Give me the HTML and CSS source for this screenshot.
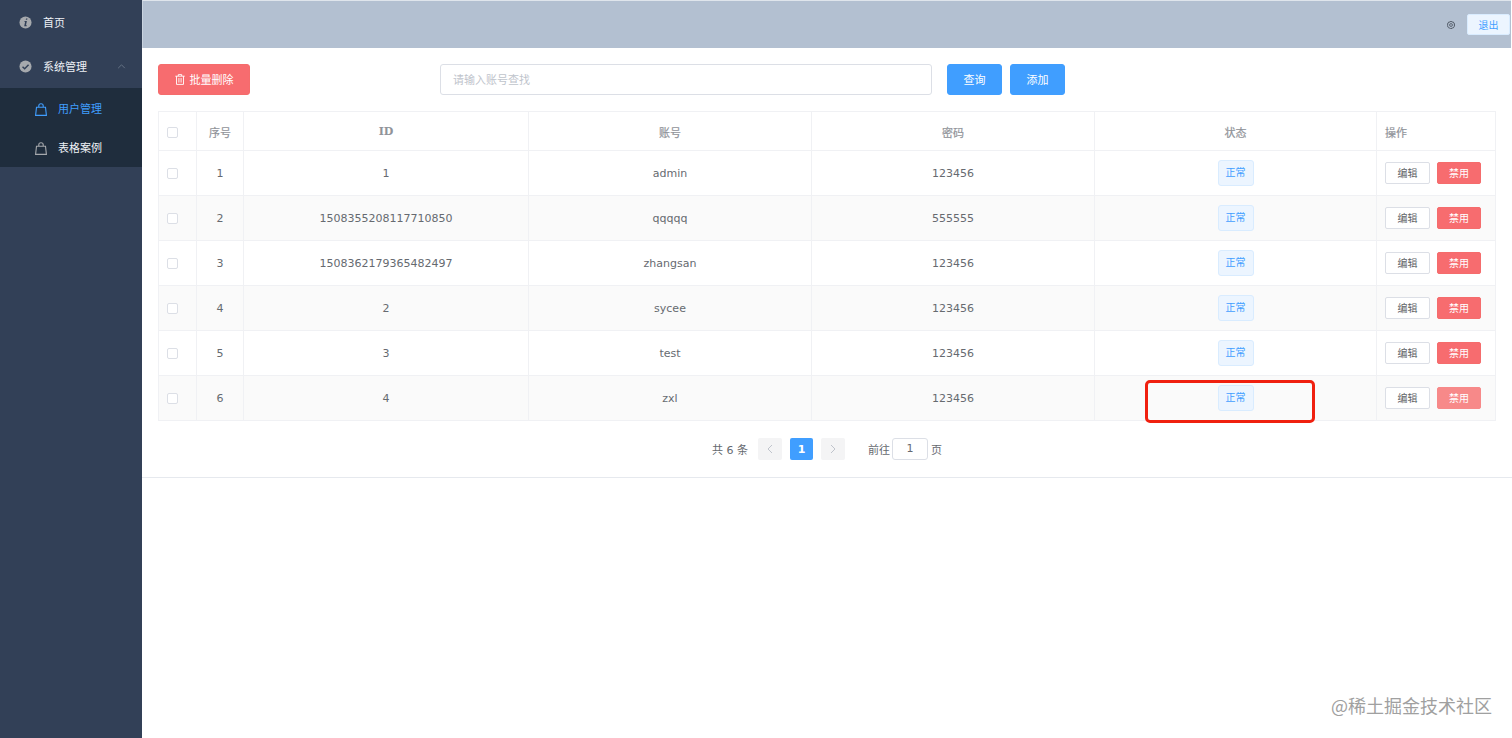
FILE: index.html
```html
<!DOCTYPE html>
<html lang="zh-CN">
<head>
<meta charset="utf-8">
<title>用户管理</title>
<link rel="stylesheet" href="styles.css">
</head>
<body>
<div class="app">
  <aside class="sidebar">
    <div class="menu-item home">
      <svg class="round-icon" viewBox="0 0 14 14"><circle cx="7" cy="7" r="6.5" fill="#a6a9ad"/><path d="M7.6 2.6h1.5l-.3 1.5H7.3zM6 5.4h2.5L7.500 10h1l-.3 1H5.600l1-4.700h-1z" fill="#324057"/></svg>
      <span>首页</span>
    </div>
    <div class="menu-item system">
      <svg class="round-icon" viewBox="0 0 14 14"><circle cx="7" cy="7" r="6.5" fill="#a6a9ad"/><path d="M3.800 7.200l2.300 2.200 4.200-4.300" fill="none" stroke="#324057" stroke-width="1.600"/></svg>
      <span>系统管理</span>
      <svg class="chevron" viewBox="0 0 10 6"><path d="M1 5l4-4 4 4" fill="none" stroke="#6f7c8d" stroke-width="1"/></svg>
    </div>
    <div class="submenu">
      <div class="sub-item active">
        <svg class="bag" viewBox="0 0 12 13"><path d="M.6 12.400L1.500 4.300h9l.9 8.100zM3.800 4.300V2.700Q3.800.7 6 .7T8.200 2.700v1.600" fill="none" stroke="currentColor" stroke-width="1.100"/></svg>
        <span>用户管理</span>
      </div>
      <div class="sub-item">
        <svg class="bag" viewBox="0 0 12 13"><path d="M.6 12.400L1.500 4.300h9l.9 8.100zM3.800 4.300V2.700Q3.800.7 6 .7T8.200 2.700v1.600" fill="none" stroke="#a6a9ad" stroke-width="1.100"/></svg>
        <span>表格案例</span>
      </div>
    </div>
  </aside>
  <main class="main">
    <header class="topbar">
      <svg class="gear" viewBox="0 0 12 12"><circle cx="6" cy="6" r="4.200" fill="none" stroke="#555e6b" stroke-width="1.300" stroke-dasharray="2.200 .4"/><circle cx="6" cy="6" r="1.700" fill="none" stroke="#555e6b" stroke-width="1.100"/></svg>
      <button class="logout">退出</button>
    </header>
    <section class="content">
      <div class="toolbar">
        <button class="btn danger batch">
          <svg class="trash" viewBox="0 0 10 11"><path d="M.3 2.200h9.400M3.300 2V.6h3.400V2M1.500 2.200v8.200h7V2.200M3.900 4v4.600M6.100 4v4.600" fill="none" stroke="#fff" stroke-width=".9"/></svg>
          <span>批量删除</span>
        </button>
        <div class="search">请输入账号查找</div>
        <button class="btn primary query">查询</button>
        <button class="btn primary add">添加</button>
      </div>
      <table class="grid">
        <colgroup>
          <col class="c-check"><col class="c-num"><col class="c-id"><col class="c-acc"><col class="c-pwd"><col class="c-state"><col class="c-op">
        </colgroup>
        <thead>
          <tr>
            <th><span class="check"></span></th><th>序号</th><th class="latin">ID</th><th>账号</th><th>密码</th><th>状态</th><th class="left">操作</th>
          </tr>
        </thead>
        <tbody>
          <tr>
            <td><span class="check"></span></td><td>1</td><td>1</td><td>admin</td><td>123456</td><td><span class="tag">正常</span></td>
            <td class="left"><div class="ops"><button class="mini plain">编辑</button><button class="mini red">禁用</button></div></td>
          </tr>
          <tr>
            <td><span class="check"></span></td><td>2</td><td>1508355208117710850</td><td>qqqqq</td><td>555555</td><td><span class="tag">正常</span></td>
            <td class="left"><div class="ops"><button class="mini plain">编辑</button><button class="mini red">禁用</button></div></td>
          </tr>
          <tr>
            <td><span class="check"></span></td><td>3</td><td>1508362179365482497</td><td>zhangsan</td><td>123456</td><td><span class="tag">正常</span></td>
            <td class="left"><div class="ops"><button class="mini plain">编辑</button><button class="mini red">禁用</button></div></td>
          </tr>
          <tr>
            <td><span class="check"></span></td><td>4</td><td>2</td><td>sycee</td><td>123456</td><td><span class="tag">正常</span></td>
            <td class="left"><div class="ops"><button class="mini plain">编辑</button><button class="mini red">禁用</button></div></td>
          </tr>
          <tr>
            <td><span class="check"></span></td><td>5</td><td>3</td><td>test</td><td>123456</td><td><span class="tag">正常</span></td>
            <td class="left"><div class="ops"><button class="mini plain">编辑</button><button class="mini red">禁用</button></div></td>
          </tr>
          <tr>
            <td><span class="check"></span></td><td>6</td><td>4</td><td>zxl</td><td>123456</td><td><span class="tag">正常</span></td>
            <td class="left"><div class="ops"><button class="mini plain">编辑</button><button class="mini red faded">禁用</button></div></td>
          </tr>
        </tbody>
      </table>
      <nav class="pager">
        <span class="total">共 6 条</span>
        <span class="page-btn"><svg viewBox="0 0 6 10"><path d="M5 1L1 5l4 4" fill="none" stroke="#c0c4cc" stroke-width="1"/></svg></span>
        <span class="page-btn current">1</span>
        <span class="page-btn"><svg viewBox="0 0 6 10"><path d="M1 1l4 4-4 4" fill="none" stroke="#c0c4cc" stroke-width="1"/></svg></span>
        <span class="goto">前往</span>
        <span class="page-input">1</span>
        <span class="unit">页</span>
      </nav>
    </section>
  </main>
</div>
<div class="highlight"></div>
<div class="watermark">@稀土掘金技术社区</div>
</body>
</html>
```
FILE: styles.css
```css
* { box-sizing: border-box; }
html, body { margin: 0; height: 100%; overflow: hidden; }
body {
  font-family: "DejaVu Sans", "Noto Sans CJK SC", sans-serif;
  font-size: 11px;
  color: #666a70;
  background: #fff;
}
button { font-family: inherit; cursor: pointer; }

.app { display: flex; height: 738px; }

.sidebar { width: 142px; flex: none; background: #324057; color: #fff; }
.menu-item { display: flex; align-items: center; padding-left: 19px; font-size: 11px; color: #eef1f6; }
.menu-item span { margin-left: 11px; margin-bottom: 1px; }
.menu-item.home { height: 44px; }
.menu-item.system { height: 44px; }
.round-icon { width: 13px; height: 13px; flex: none; }
.chevron { width: 9px; height: 5px; margin-left: 30px; }
.submenu { background: #1f2d3d; height: 79px; padding-top: 2px; }
.sub-item { display: flex; align-items: center; height: 39px; padding-left: 35px; color: #eef1f6; }
.sub-item.active { color: #409eff; }
.sub-item span { margin-left: 11px; margin-bottom: 4px; }
.bag { width: 12px; height: 13px; flex: none; }

.main { flex: 1; min-width: 0; display: flex; flex-direction: column; margin-right: 1px; }
.topbar {
  height: 48px; flex: none; background: #b3c0d1; border-top: 1px solid #dfe5ec; border-left: 1px solid #c9d3df;
  display: flex; align-items: center; justify-content: flex-end; padding-right: 1px;
}
.gear { width: 10px; height: 10px; margin-right: 11px; }
.logout {
  width: 43px; height: 21px; padding: 0 0 1px; font-size: 10px; color: #409eff;
  background: #ecf5ff; border: 1px solid #d9ecff; border-radius: 2px;
}

.content { height: 430px; flex: none; padding: 16px 15px 0 16px; border-bottom: 1px solid #e6e9ee; margin-right: -1px; }
.toolbar { display: flex; align-items: center; height: 31px; }
.btn { height: 31px; border-radius: 3px; padding: 0 0 2px; font-size: 11px; color: #fff; border: 1px solid transparent; }
.btn.danger { width: 92px; background: #f76c6f; border-color: #f56c6c; display: flex; align-items: center; justify-content: center; gap: 5px; }
.trash { width: 10px; height: 11px; margin-top: 2px; }
.search {
  width: 492px; height: 31px; margin-left: 190px; padding-left: 12px; line-height: 31px;
  border: 1px solid #dcdfe6; border-radius: 3px; color: #c0c4cc;
}
.btn.primary { width: 55px; background: #409eff; border-color: #409eff; }
.btn.query { margin-left: 15px; }
.btn.add { margin-left: 8px; }

.grid { margin-top: 16px; width: 1337px; table-layout: fixed; border-collapse: collapse; border: 1px solid #f0f1f4; }
.c-check { width: 38px; } .c-num { width: 47px; } .c-id { width: 285px; } .c-acc { width: 283px; }
.c-pwd { width: 283px; } .c-state { width: 282px; } .c-op { width: 119px; }
.grid th, .grid td { border: 1px solid #f0f1f4; padding: 0; text-align: center; }
.grid th { height: 39px; padding-top: 1px; color: #909399; font-weight: 400; -webkit-text-stroke: .2px #909399; }
.grid th:first-child, .grid td:first-child { padding-right: 10px; }
.grid td { height: 45px; }
.grid th.latin { font-family: "DejaVu Serif", serif; font-weight: 700; -webkit-text-stroke: 0; }
.grid th.left, .grid td.left { text-align: left; padding-left: 8px; }
.grid td.left { padding-bottom: 1px; }
.grid tbody tr:nth-child(even) td { background: #fafafa; }
.check { display: inline-block; width: 11px; height: 11px; border: 1px solid #dcdfe6; border-radius: 2px; background: #fff; vertical-align: middle; }
.tag {
  display: inline-block; width: 36px; height: 26px; line-height: 24px; font-size: 10px; text-align: center;
  color: #409eff; background: #ecf5ff; border: 1px solid #d9ecff; border-radius: 3px;
}
.ops { display: flex; gap: 7px; }
.mini { width: 45px; height: 22px; padding: 0 0 1px; font-size: 10px; border-radius: 2px; }
.mini.plain { background: #fff; border: 1px solid #dcdfe6; color: #606266; }
.mini.red { width: 44px; background: #f76c6f; border: 1px solid #f56c6c; color: #fff; }
.mini.red.faded { background: #f78989; border-color: #f78989; }

.pager { display: flex; align-items: center; height: 22px; margin-top: 17px; padding-left: 554px; }
.total { width: 46px; }
.page-btn {
  width: 24px; height: 22px; background: #f4f4f5; border-radius: 2px; margin-right: 8px;
  display: flex; align-items: center; justify-content: center; font-weight: 700; color: #fff;
}
.page-btn svg { width: 6px; height: 10px; }
.page-btn.current { width: 23px; background: #409eff; }
.goto { margin-left: 15px; }
.page-input { width: 36px; height: 22px; margin: 0 3px 0 2px; line-height: 20px; text-align: center; border: 1px solid #dcdfe6; border-radius: 3px; }

.highlight { position: absolute; left: 1145px; top: 380px; width: 170px; height: 43px; border: 3px solid #f0200f; border-radius: 5px; }
.watermark { position: absolute; right: 20px; top: 693px; font-size: 18px; line-height: 24px; color: #a0a0a0; font-family: "Noto Sans CJK SC", sans-serif; }
```
